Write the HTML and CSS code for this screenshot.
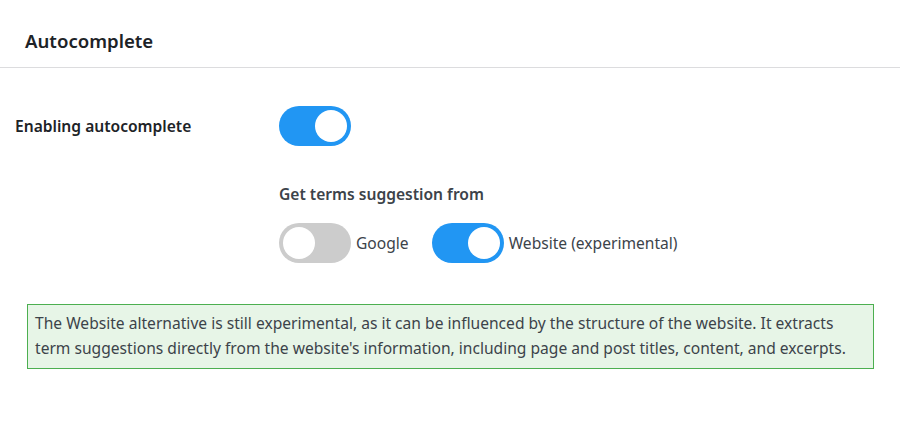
FILE: index.html
```html
<!DOCTYPE html>
<html lang="en">
<head>
  <meta charset="UTF-8">
  <meta name="viewport" content="width=device-width, initial-scale=1.0">
  <title>Autocomplete settings</title>
  <link rel="stylesheet" href="styles.css">
</head>
<body>
  <!-- Header -->
  <div class="panel-header">
    <h2 class="panel-title">Autocomplete</h2>
  </div>

  <!-- Settings -->
  <div class="settings">
    <div class="setting-row">
      <div class="setting-label">Enabling autocomplete</div>
      <div class="setting-control">
        <label class="switch">
          <input type="checkbox" checked>
          <span class="slider"></span>
        </label>

        <div class="source-group">
          <div class="source-title">Get terms suggestion from</div>
          <div class="source-options">
            <div class="source-option">
              <label class="switch">
                <input type="checkbox">
                <span class="slider"></span>
              </label>
              <span class="option-text">Google</span>
            </div>
            <div class="source-option">
              <label class="switch">
                <input type="checkbox" checked>
                <span class="slider"></span>
              </label>
              <span class="option-text">Website (experimental)</span>
            </div>
          </div>
        </div>
      </div>
    </div>

    <div class="notice">
      The Website alternative is still experimental, as it can be influenced by the structure of the website. It extracts term suggestions directly from the website's information, including page and post titles, content, and excerpts.
    </div>
  </div>
</body>
</html>
```

FILE: styles.css
```css
body {
  font-family: 'Noto Sans', 'Open Sans', sans-serif;
  margin: 0;
  padding: 0;
  background-color: #fff;
  color: #3c434a;
}

/* Header */
.panel-header {
  box-sizing: border-box;
  padding: 14px 25px 0;
  height: 68px;
  border-bottom: 1px solid #dcdcde;
  display: flex;
  align-items: center;
}

.panel-title {
  margin: 0;
  font-size: 18.6px;
  font-weight: 600;
  color: #1d2327;
}

/* Settings */
.settings {
  padding: 38px 0 0;
}

.setting-row {
  display: flex;
  align-items: flex-start;
}

.setting-label {
  width: 264px;
  padding: 0 0 0 15px;
  line-height: 40px;
  font-size: 15.6px;
  font-weight: 600;
  color: #1d2327;
}

.setting-control {
  display: flex;
  flex-direction: column;
  align-items: flex-start;
}

/* Toggle switch */
.switch {
  position: relative;
  display: inline-block;
  width: 72px;
  height: 40px;
  flex-shrink: 0;
}

.switch input {
  opacity: 0;
  width: 0;
  height: 0;
}

.slider {
  position: absolute;
  cursor: pointer;
  inset: 0;
  background-color: #ccc;
  border-radius: 20px;
  transition: background-color 0.3s ease;
}

.slider::before {
  content: "";
  position: absolute;
  width: 32px;
  height: 32px;
  left: 4px;
  top: 4px;
  background-color: #fff;
  border-radius: 50%;
  transition: transform 0.3s ease;
}

.switch input:checked + .slider {
  background-color: #2196f3;
}

.switch input:checked + .slider::before {
  transform: translateX(32px);
}

/* Suggestion sources */
.source-group {
  margin-top: 37px;
}

.source-title {
  font-size: 15.6px;
  font-weight: 600;
  color: #3c434a;
  line-height: 22px;
}

.source-options {
  display: flex;
  gap: 23px;
  margin-top: 18px;
}

.source-option {
  display: flex;
  align-items: center;
  gap: 5px;
}

.option-text {
  font-size: 15.6px;
}

/* Notice */
.notice {
  margin: 41px 26px 0 27px;
  padding: 6px 7px 7px;
  background-color: #e7f5e7;
  border: 1px solid #4caf50;
  font-size: 15.6px;
  line-height: 25px;
}
```
